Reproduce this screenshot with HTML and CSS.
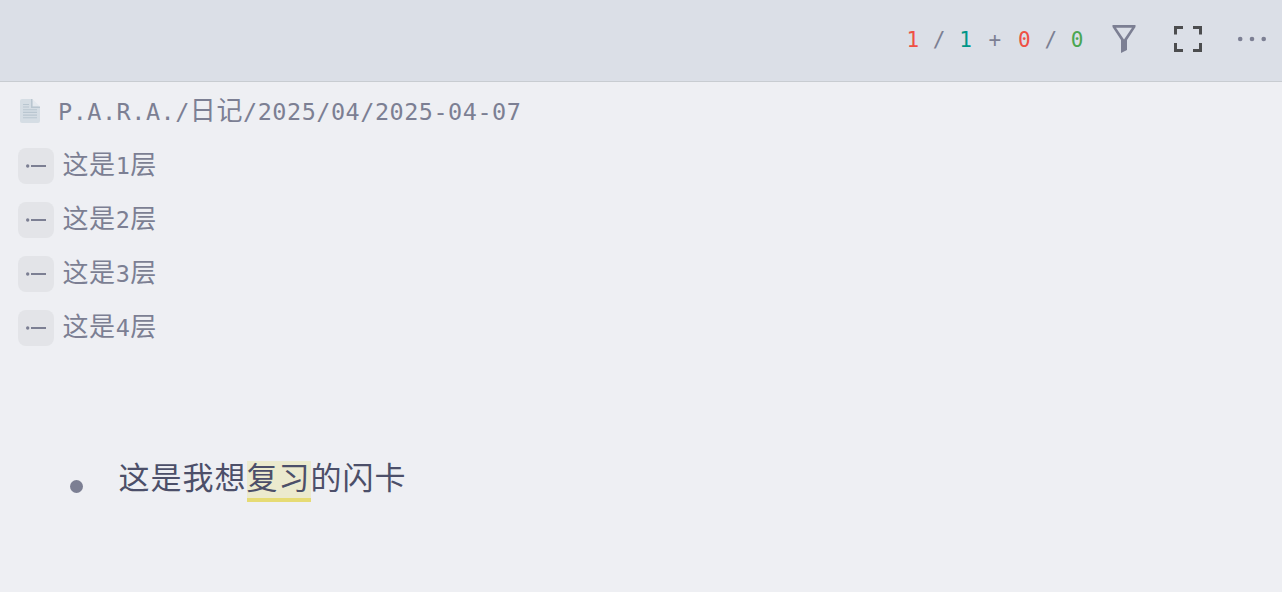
FILE: index.html
```html
<!DOCTYPE html>
<html lang="zh-CN">
<head>
<meta charset="utf-8">
<title>闪卡</title>
<link rel="stylesheet" href="styles.css">
</head>
<body>
<header class="toolbar">
  <div class="counts"><span class="red">1</span> / <span class="teal">1</span> <span class="plus">+</span> <span class="red">0</span> / <span class="green">0</span></div>
  <svg class="filter" width="24" height="28" viewBox="0 0 24 28"><path fill="currentColor" fill-rule="evenodd" d="M.5 0H23.500V2L15 15V25L9 28V15L.5 2ZM4 2.700L12 14.500L20 2.700Z"/></svg>
  <svg class="full" width="28" height="26" viewBox="0 0 28 26"><path d="M1.500 8.500V1.500H9M19 1.500H26.500V8.500M26.500 17V24.500H19M9 24.500H1.500V17" fill="none" stroke="currentColor" stroke-width="3"/></svg>
  <svg class="more" width="30" height="6" viewBox="0 0 30 6"><g fill="currentColor"><circle cx="3.200" cy="3" r="2.300"/><circle cx="15" cy="3" r="2.300"/><circle cx="26.700" cy="3" r="2.300"/></g></svg>
</header>
<main>
  <nav class="crumbs">
    <div class="path"><svg class="doc" width="20" height="24" viewBox="0 0 20 24"><path d="M2 0H11L20 9V22Q20 24 18 24H2Q0 24 0 22V2Q0 0 2 0Z" fill="#d5dde4"/><path d="M12.500 0L20 7.500H12.500Z" fill="#e4e9ee"/><path d="M11 0H12.500V7.500H20V9H11Z" fill="#b9c6d0"/><path d="M3 5.500H9M3 8H9M3 10.700H17M3 13.400H17M3 16.100H17M3 18.800H17" stroke="#b9c6d0" stroke-width="1.100"/></svg><span class="crumb"><span class="latin">P.A.R.A./</span>日记<span class="latin">/2025/04/2025-04-07</span></span></div>
    <div class="level"><span class="chip"><svg width="20" height="4" viewBox="0 0 20 4"><circle cx="1.700" cy="2" r="1.700" fill="currentColor"/><path d="M5 2H20" stroke="currentColor" stroke-width="2"/></svg></span><span class="crumb">这是<span class="latin">1</span>层</span></div>
    <div class="level"><span class="chip"><svg width="20" height="4" viewBox="0 0 20 4"><circle cx="1.700" cy="2" r="1.700" fill="currentColor"/><path d="M5 2H20" stroke="currentColor" stroke-width="2"/></svg></span><span class="crumb">这是<span class="latin">2</span>层</span></div>
    <div class="level"><span class="chip"><svg width="20" height="4" viewBox="0 0 20 4"><circle cx="1.700" cy="2" r="1.700" fill="currentColor"/><path d="M5 2H20" stroke="currentColor" stroke-width="2"/></svg></span><span class="crumb">这是<span class="latin">3</span>层</span></div>
    <div class="level"><span class="chip"><svg width="20" height="4" viewBox="0 0 20 4"><circle cx="1.700" cy="2" r="1.700" fill="currentColor"/><path d="M5 2H20" stroke="currentColor" stroke-width="2"/></svg></span><span class="crumb">这是<span class="latin">4</span>层</span></div>
  </nav>
  <div class="card"><span class="dot"></span><p class="sentence">这是我想<mark class="cloze">复习</mark>的闪卡</p></div>
</main>
</body>
</html>
```
FILE: styles.css
```css
body {
  margin: 0;
  height: 592px;
  overflow: hidden;
  background: #eeeff3;
  color: #7c7f93;
  font-family: "Noto Sans CJK SC", sans-serif;
}
.toolbar {
  box-sizing: border-box;
  height: 82px;
  display: flex;
  align-items: center;
  justify-content: flex-end;
  padding: 0 15px 3px 0;
  background: #dbdfe7;
  border-bottom: 1px solid #c8ccd1;
}
.counts {
  padding-top: 2px;
  font: 21px/30px "DejaVu Sans Mono", monospace;
  letter-spacing: 0.55px;
  white-space: pre;
}
.plus { margin: 0 3px; }
.red { color: #ef5044; }
.teal { color: #009688; }
.green { color: #4aa652; }
.filter { margin-left: 28px; }
.full { margin-left: 38px; color: #4c4d4f; }
.more { margin-left: 35px; }
.crumbs { padding: 3px 18px 0; }
.path, .level {
  display: flex;
  align-items: center;
  height: 54px;
}
.path { padding-left: 2px; gap: 18px; }
.doc { margin-bottom: 2px; }
.level { gap: 8.5px; }
.crumb {
  padding-bottom: 4px;
  font-size: 26px;
  line-height: 36px;
  letter-spacing: 0.6px;
}
.latin {
  font-family: "DejaVu Sans Mono", monospace;
  font-size: 23.5px;
  letter-spacing: 0.5px;
}
.chip {
  display: flex;
  align-items: center;
  justify-content: center;
  width: 36px;
  height: 36px;
  border-radius: 8px;
  background: #e3e4e8;
}
.card {
  display: flex;
  align-items: center;
  margin-top: 106px;
  padding-left: 69.500px;
}
.dot {
  width: 13px;
  height: 13px;
  margin-top: 9px;
  border-radius: 50%;
  background: #7c7f93;
}
.sentence {
  margin: 0 0 0 36px;
  color: #4c4f69;
  font-size: 31px;
  line-height: 29px;
  letter-spacing: 1px;
}
.cloze {
  display: inline-block;
  box-sizing: border-box;
  height: 41px;
  line-height: 29px;
  color: inherit;
  background: #eceace;
  border-bottom: 4px solid #e6db74;
}
```
